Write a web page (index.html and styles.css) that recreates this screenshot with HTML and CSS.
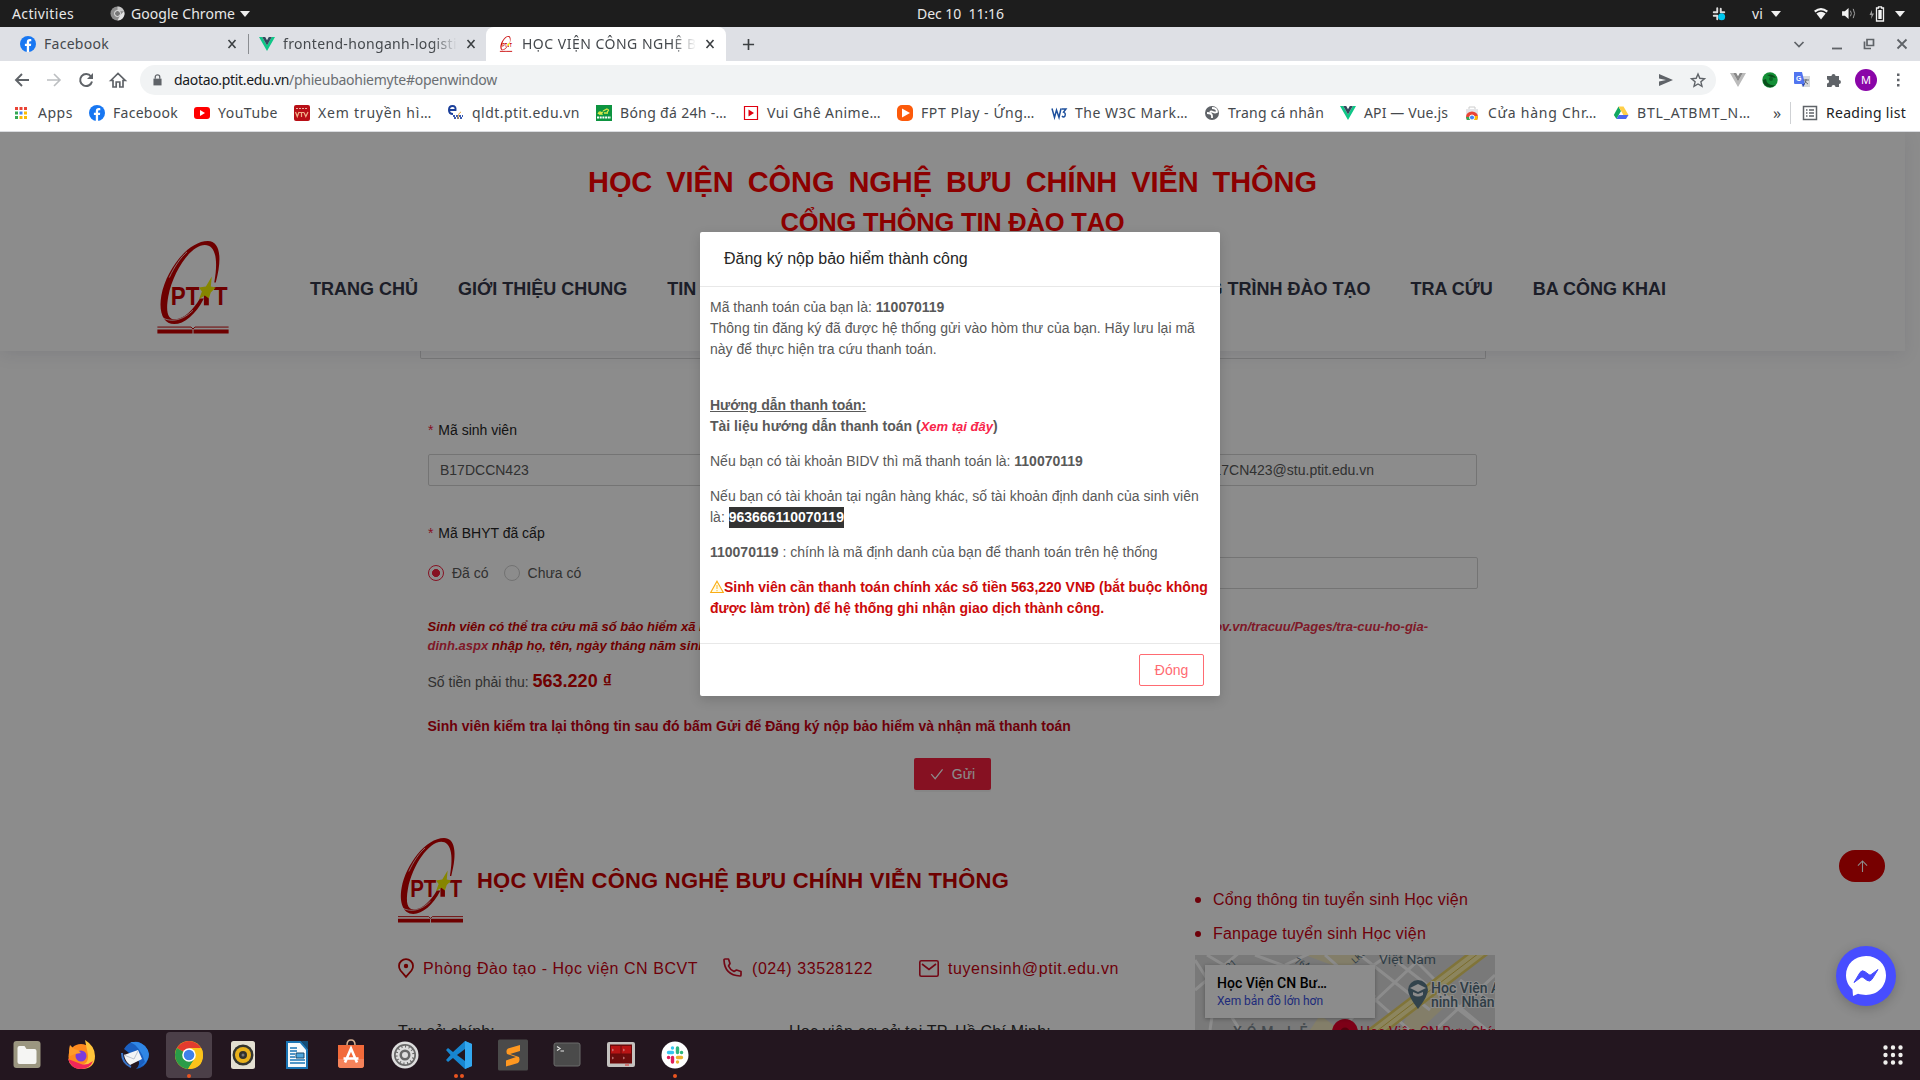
FILE: index.html
```html
<!DOCTYPE html>
<html lang="vi">
<head>
<meta charset="utf-8">
<title>Học viện Công nghệ Bưu chính Viễn thông</title>
<link rel="stylesheet" href="styles.css">
</head>
<body>
<svg class="defs" aria-hidden="true">
  <symbol id="fb" viewBox="0 0 16 16"><circle cx="8" cy="8" r="8" fill="#1877f2"/><path d="M6.8 16V10H4.9V7.8h1.9V6.2c0-2 1.1-3.1 2.9-3.1.8 0 1.6.2 1.6.2v1.9h-1c-.9 0-1.2.5-1.2 1.100v1.500h2.100L10.900 10H9.100v6z" fill="#fff"/></symbol>
  <symbol id="vue" viewBox="0 0 16 16"><path d="M0 1h3.200L8 9.400 12.800 1H16L8 15z" fill="#0fc787"/><path d="M3.200 1h3L8 4.200 9.800 1h3L8 9.400z" fill="#35495e"/></symbol>
  <symbol id="close" viewBox="0 0 16 16"><path d="M4.500 4l7 8M11.500 4l-7 8" stroke="#3c4043" stroke-width="1.600"/></symbol>
  <symbol id="ptit" viewBox="0 0 72 94">
    <path fill-rule="evenodd" d="M17 84C6 84 1 72 4 55 9 29 31 0 51 0c12 0 15 16 8 42h-1.500C62 17 58 4 48 4 34 4 16 30 11 56 8 73 11 80 19 79c8-1 17-9 24-21h4C39 74 27 84 17 84z" fill="#c80000"/>
    <path d="M4 77c10 6 22 3 32-7" stroke="#fff" stroke-width=".8" fill="none"/>
    <path d="M12 37C17 26 24 16 30 11" stroke="#fff" stroke-width=".8" fill="none"/>
    <text x="13.500" y="65" class="ptit-t" textLength="29" lengthAdjust="spacingAndGlyphs">PT</text><text x="57" y="65" class="ptit-t" textLength="14" lengthAdjust="spacingAndGlyphs">T</text>
    <path d="M47 54h5v11h-5z" fill="#c80000"/>
    <path d="M55 36l-1 10 5 1-5 5-2 6-4-3-6 4 3-8-3-4 7-1z" fill="#f5f500"/>
    <path d="M0 87h34l2 2 2-2h34" stroke="#c80000" stroke-width="1" fill="none"/><path d="M0 89.500h35.500v4H0zM36.500 89.500H72v4H36.500z" fill="#c80000"/>
  </symbol>
</svg>

<div class="sysbar">
  <span class="sys-act" data-w="62">Activities</span>
  <svg class="i15" viewBox="0 0 16 16"><circle cx="8" cy="8" r="7.500" fill="#8d8d8d"/><path d="M8 .5a7.500 7.500 0 0 1 7 5H8z" fill="#c8c8c8"/><path d="M15 5.500a7.500 7.500 0 0 1-7 10l3-6z" fill="#e2e2e2"/><circle cx="8" cy="8" r="3.200" fill="#777" stroke="#eee"/></svg>
  <span class="sys-app" data-w="104">Google Chrome</span><i class="tri"></i>
  <span class="sys-clock" data-w="87">Dec 10&nbsp; 11:16</span>
  <div class="sys-right">
    <svg class="s-slack" viewBox="0 0 16 16"><path d="M6 1.500v4M2 6h4M10 2v4M10 6h4M2 10h4M6 10v4" stroke="#ddd" stroke-width="2.200" stroke-linecap="round"/><circle cx="11" cy="11" r="4" fill="#00c8f0"/></svg>
    <span class="s-vi" data-w="11">vi</span><i class="tri s-t1"></i>
    <svg class="s-wifi" viewBox="0 0 16 14"><path d="M.5 4Q8-2 15.500 4L14 6Q8 1 2 6z" fill="#f2f2f2"/><path d="M3 7Q8 3 13 7l-5 6.500z" fill="#f2f2f2"/></svg>
    <svg class="s-snd" viewBox="0 0 16 14"><path d="M0 4.500h3L7 1v12L3 9.500H0z" fill="#f2f2f2"/><path d="M9 4q2 3 0 6M12 2q3 5 0 10" stroke="#aaa" fill="none"/></svg>
    <svg class="s-bat" viewBox="0 0 16 16"><path d="M3 4L.5 9h2L2 13l3-5.500H3z" fill="#999"/><path d="M7.500 2h2V.8h3V2h2v13h-7z" fill="none" stroke="#f2f2f2" stroke-width="1.300"/><path d="M9.300 4h3.400v9H9.300z" fill="#f2f2f2"/></svg>
    <i class="tri"></i>
  </div>
</div>

<div class="tabs">
  <div class="tab tab1"><svg class="i16"><use href="#fb"/></svg><span class="tt"><b data-w="65">Facebook</b></span><svg class="i16"><use href="#close"/></svg></div>
  <div class="tab tab2"><svg class="i16"><use href="#vue"/></svg><span class="tt fade"><b data-w="181">frontend-honganh-logistic</b></span><svg class="i16"><use href="#close"/></svg></div>
  <div class="tab tab3"><svg class="i16"><use href="#ptit"/></svg><span class="tt fade"><b data-w="186">HỌC VIỆN CÔNG NGHỆ BƯ</b></span><svg class="i16"><use href="#close"/></svg></div>
  <svg class="plus" viewBox="0 0 14 14"><path d="M7 1v12M1 7h12" stroke="#3c4043" stroke-width="1.800"/></svg>
  <div class="win">
    <svg viewBox="0 0 12 12"><path d="M1.500 4L6 8.500 10.500 4" fill="none" stroke="#5f6368" stroke-width="1.700"/></svg>
    <svg viewBox="0 0 12 12"><path d="M1 10.500h10" stroke="#5f6368" stroke-width="1.800"/></svg>
    <svg viewBox="0 0 12 12"><path d="M4 1.500h6.500v6H4zM1.500 3.500v7H8" fill="none" stroke="#5f6368" stroke-width="1.700"/></svg>
    <svg viewBox="0 0 12 12"><path d="M1.500 1.500l9 9M10.500 1.500l-9 9" stroke="#5f6368" stroke-width="1.800"/></svg>
  </div>
</div>

<div class="toolbar">
  <svg class="i16" viewBox="0 0 16 16"><path d="M15 8H2M8 2L2 8l6 6" fill="none" stroke="#5f6368" stroke-width="1.900"/></svg>
  <svg class="i16" viewBox="0 0 16 16"><path d="M1 8h13M8 2l6 6-6 6" fill="none" stroke="#bcbec1" stroke-width="1.600"/></svg>
  <svg class="i16" viewBox="0 0 16 16"><path d="M13 4.500A6 6 0 1 0 14 9.500" fill="none" stroke="#5f6368" stroke-width="2"/><path d="M15 1v6H9z" fill="#5f6368"/></svg>
  <svg class="i16" viewBox="0 0 16 16"><path d="M.8 8.500L8 1.500l7.200 7H13V15H9.800v-5H6.200v5H3V8.500z" fill="none" stroke="#5f6368" stroke-width="1.700"/></svg>
  <div class="omni">
    <svg class="lock" viewBox="0 0 10 13"><path d="M.5 5h9v7.500h-9z" fill="#5f6368"/><path d="M2.500 5V3a2.500 2.300 0 0 1 5 0v2" fill="none" stroke="#5f6368" stroke-width="1.400"/></svg>
    <span class="url"><span class="host" data-w="115">daotao.ptit.edu.vn</span><span data-w="208">/phieubaohiemyte#openwindow</span></span>
    <svg class="i16 send" viewBox="0 0 16 16"><path d="M1 2l14 6L1 14V9.500L8 8 1 6.500z" fill="#5f6368"/></svg>
    <svg class="i16" viewBox="0 0 16 16"><path d="M8 2l1.800 4.300 4.700.4-3.600 3.100 1.100 4.600L8 12l-4 2.400 1.100-4.600-3.600-3.100 4.700-.4z" fill="none" stroke="#5f6368" stroke-width="1.400"/></svg>
  </div>
  <svg class="i16" viewBox="0 0 16 16"><path d="M0 1h3.200L8 9.400 12.800 1H16L8 15z" fill="#bbb"/><path d="M3.200 1h3L8 4.200 9.800 1h3L8 9.400z" fill="#888"/></svg>
  <svg class="i16" viewBox="0 0 16 16"><circle cx="8" cy="8" r="7.700" fill="#149037"/><path d="M1 8a7 7 0 0 0 12 5q-8 1-9-6zM5 3q6-2 9 3l-5-1z" fill="#0a4f1c"/><circle cx="9" cy="7" r="2" fill="#0a6424"/></svg>
  <svg class="i16" viewBox="0 0 16 16"><path d="M6 4h10v11H8z" fill="#d5d7da"/><path d="M0 0h8l3 12H1q-1 0-1-1z" fill="#5175f0"/><path d="M8 12h3l-2 3z" fill="#2845b8"/><text x="2" y="9" class="g-t">G</text><path d="M9.500 8H15M12 7v1q0 3-2 4M11 9q1 2 3 3" stroke="#5a6068" stroke-width=".9" fill="none"/></svg>
  <svg class="i16" viewBox="0 0 16 16"><path d="M1 4h4.500a2 2 0 1 1 4 0H13v4a1.900 1.900 0 1 1 0 3.900V15H9.500a1.900 1.900 0 1 0-4 0H1v-3.500a1.900 1.900 0 1 0 0-4z" fill="#5f6368"/></svg>
  <span class="avatar">M</span>
  <svg class="i16" viewBox="0 0 16 16"><path d="M7 1.500h2.500V4H7zM7 6.800h2.500v2.500H7zM7 12h2.500v2.500H7z" fill="#5f6368"/></svg>
</div>

<div class="marks">
  <a><svg class="i12" viewBox="0 0 12 12"><path d="M0 0h3v3H0zM4.500 0h3v3h-3zM9 0h3v3H9z" fill="#ea4335"/><path d="M0 4.500h3v3H0z" fill="#34a853"/><path d="M4.500 4.500h3v3h-3z" fill="#4285f4"/><path d="M9 4.500h3v3H9zM4.500 9h3v3h-3zM9 9h3v3H9z" fill="#fbbc05"/><path d="M0 9h3v3H0z" fill="#34a853"/></svg><span data-w="35">Apps</span></a>
  <a><svg class="i16"><use href="#fb"/></svg><span data-w="65">Facebook</span></a>
  <a><svg class="i16" viewBox="0 0 16 16"><rect y="2" width="16" height="12" rx="3" fill="#f00"/><path d="M6 5l5 3-5 3z" fill="#fff"/></svg><span data-w="60">YouTube</span></a>
  <a><svg class="i16" viewBox="0 0 16 16"><rect width="16" height="16" rx="2" fill="#b80f16"/><path d="M1.500 7l1.800 4.500L5 7M5 7.500h5M7.500 8v4M10 7.500l1.800 4L14 7" fill="none" stroke="#f0b088" stroke-width="1.200"/><path d="M2 3.500h12" stroke="#e8b0a0" stroke-dasharray="2 1"/></svg><span data-w="114">Xem truyền hì…</span></a>
  <a><svg class="i16" viewBox="0 0 16 16"><path d="M1.500 5h6Q8 1 4.500 1T1 5t4 4" fill="none" stroke="#1b3f9a" stroke-width="2"/><path d="M5 11h10M6 13h9" stroke="#3b5bb0" stroke-width="1.800" stroke-dasharray="2 1"/><path d="M10 14q0-6 3-7" stroke="#e5a63c" fill="none"/></svg><span data-w="108">qldt.ptit.edu.vn</span></a>
  <a><svg class="i16" viewBox="0 0 16 16"><rect width="16" height="16" fill="#0d9440"/><path d="M2 9q2-4 4 0H3l4-2M7 6l4-2q3 1 0 3M8 8h4" stroke="#d8e84a" stroke-width="1.300" fill="none"/><path d="M1 12.500h14" stroke="#fff" stroke-width="2" stroke-dasharray="2 .7"/></svg><span data-w="107">Bóng đá 24h -…</span></a>
  <a><svg class="i16" viewBox="0 0 16 16"><path d="M1.500 1.500h13v13h-13z" fill="#fff" stroke="#e00010" stroke-width="1.200"/><path d="M5.500 4.500L11 8l-5.500 3.500z" fill="#e00010"/></svg><span data-w="114">Vui Ghê Anime…</span></a>
  <a><svg class="i16" viewBox="0 0 16 16"><rect width="16" height="16" rx="5" fill="#fc5a0a"/><path d="M5 3.500L13 8l-8 4.500z" fill="#fff"/></svg><span data-w="114">FPT Play - Ứng…</span></a>
  <a><svg class="i16" viewBox="0 0 16 16"><path d="M1 3.500l2.500 9L5.500 5l2.500 7.500L10 3.500" fill="none" stroke="#1c4f9c" stroke-width="1.500"/><path d="M10.500 4H15l-2.500 3.200q2.500.8 1.500 3.800-1.500 2-3 0" fill="none" stroke="#1c4f9c" stroke-width="1.400"/></svg><span data-w="113">The W3C Mark…</span></a>
  <a><svg class="i16" viewBox="0 0 16 16"><circle cx="8" cy="8" r="7" fill="#5f6368"/><path d="M8 3q5 0 5 4-2 1-4 0t-3 0M3 8q5 0 5 3v2" stroke="#fff" stroke-width="1.800" fill="none"/></svg><span data-w="96">Trang cá nhân</span></a>
  <a><svg class="i16"><use href="#vue"/></svg><span data-w="84">API — Vue.js</span></a>
  <a><svg class="i16" viewBox="0 0 16 16"><path d="M5 4V2h6v2" fill="none" stroke="#ccc"/><path d="M2 4h12v11H2z" fill="#e4e5e8"/><path d="M2 12a6 5.500 0 0 1 12 0l-1 3H3z" fill="#ea4335"/><path d="M2 12l1 3h5V12z" fill="#34a853"/><path d="M14 11l-1 4H8l1-4z" fill="#fbbc05"/><circle cx="8" cy="12.500" r="2.500" fill="#4285f4" stroke="#fff"/></svg><span data-w="109">Cửa hàng Chr…</span></a>
  <a><svg class="i16" viewBox="0 0 16 16"><path d="M5.500 1.500L8 6 3.500 14 .8 10z" fill="#11a861"/><path d="M5.500 1.500h5L15.500 10H10.400z" fill="#ffcf48"/><path d="M3.500 14l2.300-4h9.700L13 14z" fill="#4b66ee"/></svg><span data-w="114">BTL_ATBMT_N…</span></a>
  <span class="more">»</span>
  <a class="reading"><svg class="i16" viewBox="0 0 16 16"><path d="M1.500 1.500h13v13h-13z" fill="none" stroke="#5f6368" stroke-width="1.500"/><path d="M4 5h1.500M7 5h5M4 8h1.500M7 8h5M4 11h1.500M7 11h5" stroke="#5f6368" stroke-width="1.400"/></svg><span data-w="80">Reading list</span></a>
</div>

<div class="page">
  <header class="head">
    <h1><span data-w="729">HỌC VIỆN CÔNG NGHỆ BƯU CHÍNH VIỄN THÔNG</span></h1>
    <h2><span data-w="344">CỔNG THÔNG TIN ĐÀO TẠO</span></h2>
    <div class="navrow">
      <svg class="logo"><use href="#ptit"/></svg>
      <nav><a>TRANG CHỦ</a><a>GIỚI THIỆU CHUNG</a><a>TIN TỨC</a></nav>
      <nav class="nav-r"><a>CHƯƠNG TRÌNH ĐÀO TẠO</a><a>TRA CỨU</a><a>BA CÔNG KHAI</a></nav>
    </div>
  </header>

  <section class="form">
    <div class="panel-end"></div>
    <div class="row row1">
      <div class="field"><label><em>*</em> Mã sinh viên</label><div class="input">B17DCCN423</div></div>
      <div class="field"><label>&nbsp;</label><div class="input"></div></div>
      <div class="field"><label>&nbsp;</label><div class="input mail"><span>B17CN423@stu.ptit.edu.vn</span></div></div>
    </div>
    <div class="row row2">
      <div class="field"><label><em>*</em> Mã BHYT đã cấp</label>
        <div class="radios"><i class="radio on"></i><span>Đã có</span><i class="radio"></i><span>Chưa có</span></div></div>
      <div class="field wide"><label>&nbsp;</label><div class="input"></div></div>
    </div>
    <div class="note">
      <div class="note-1"><span>Sinh viên có thể tra cứu mã số bảo hiểm xã hội tại</span><a>https://baohiemxahoi.gov.vn/tracuu/Pages/tra-cuu-ho-gia-</a></div>
      <div><a>dinh.aspx</a> nhập họ, tên, ngày tháng năm sinh</div>
    </div>
    <div class="amount">Số tiền phải thu: <b>563.220 ₫</b></div>
    <div class="check">Sinh viên kiểm tra lại thông tin sau đó bấm Gửi để Đăng ký nộp bảo hiểm và nhận mã thanh toán</div>
    <button class="send-btn"><svg viewBox="0 0 14 14"><path d="M.8 6.500L5 11.500 13 1.500" fill="none" stroke="#fff" stroke-width="1.300"/></svg>Gửi</button>
  </section>

  <footer class="foot">
    <div class="foot-l">
      <div class="brand"><svg class="logo2"><use href="#ptit"/></svg><strong data-w="532">HỌC VIỆN CÔNG NGHỆ BƯU CHÍNH VIỄN THÔNG</strong></div>
      <div class="contacts">
        <svg class="c-pin" viewBox="0 0 16 20"><path d="M8 18.800L2.500 12.500A7 7 0 1 1 13.500 12.500z" fill="none" stroke="#c80000" stroke-width="1.800"/><circle cx="8" cy="8" r="2.200" fill="#c80000"/></svg>
        <span class="c1"><span data-w="275">Phòng Đào tạo - Học viện CN BCVT</span></span>
        <svg class="c-tel" viewBox="0 0 19 19"><path d="M5.500 1H2Q1 1 1 2 1.500 17 17 18q1 0 1-1v-3.500L13.500 12 11 13.500Q7 11.500 5.500 8L7 5.500z" fill="none" stroke="#d01028" stroke-width="1.700" stroke-linejoin="round"/></svg>
        <span class="c2"><span data-w="121">(024) 33528122</span></span>
        <svg class="c-mail" viewBox="0 0 20 17"><rect x=".8" y=".8" width="18.400" height="15.400" rx="1.500" fill="none" stroke="#d01028" stroke-width="1.600"/><path d="M3 4l7 5.500L17 4" fill="none" stroke="#d01028" stroke-width="1.600"/></svg>
        <span data-w="171">tuyensinh@ptit.edu.vn</span>
      </div>
      <div class="addr"><span class="a1"><span data-w="97">Trụ sở chính:</span></span><span data-w="262">Học viện cơ sở tại TP. Hồ Chí Minh:</span></div>
    </div>
    <div class="foot-r">
      <ul><li><span data-w="255">Cổng thông tin tuyển sinh Học viện</span></li><li><span data-w="213">Fanpage tuyển sinh Học viện</span></li></ul>
      <div class="map">
        <svg viewBox="0 0 300 75">
          <rect width="300" height="75" fill="#dcdcdc"/>
          <path d="M110 0h60L150 15z M215 55l30-25 15 12-35 33h-20z M125 60l20 15h-30z" fill="#eee6c0"/>
          <g stroke="#fff" stroke-width="3" fill="none"><path d="M0 5l45 70M12 0l20 12M45-3L0 35M60 0l40 15M90 10l30-14M130 0l90 80M165 0l70 55M200 5l90 70M150 30L215-15M165 60l80-75M140 80l40-40M15 75L18 55M250 40l60 50M265 25l50 35M215 0l35 35M240 75l60-55"/></g>
          <path d="M170 85L292-8" stroke="#e9d368" stroke-width="14"/><path d="M170 85L292-8" stroke="#fff3ac" stroke-width="9"/><path d="M170 85L292-8" stroke="#ddc34e" stroke-width="1"/>
          <path d="M223 54q-10-13-10-19a10 10 0 1 1 20 0q0 6-10 19z" fill="#5c7a8b"/><path d="M215 33l8-4 8 4-8 4zM218 37v3q5 3 10 0v-3l-5 2z" fill="#fff"/>
          <circle cx="150" cy="77" r="13" fill="#e4002b"/><circle cx="150" cy="77" r="4.500" fill="#9a0018"/>
          <g class="map-t"><text x="184" y="8.500" textLength="57" lengthAdjust="spacingAndGlyphs">Việt Nam</text><text x="236" y="38" class="map-b">Học Viện An</text><text x="236" y="52" class="map-b">ninh Nhân</text>
          <text x="38" y="82" letter-spacing="5" class="map-x">XÓM LẺ</text><text x="165" y="82" class="map-red">Học Viện CN Bưu Chính</text>
          <text x="34" y="15" font-size="9" transform="rotate(-38 34 15)">81</text><text x="99" y="8" font-size="9" transform="rotate(25 99 8)">764</text><text x="160" y="9" font-size="9" transform="rotate(-42 160 9)">LK6</text></g>
        </svg>
        <div class="map-card"><b data-w="110">Học Viện CN Bư…</b><span data-w="106">Xem bản đồ lớn hơn</span></div>
      </div>
    </div>
  </footer>

  <div class="totop"><svg viewBox="0 0 12 13"><path d="M6 13V1M1 6l5-5 5 5" fill="none" stroke="#fff" stroke-width="1.200"/></svg></div>
  <div class="mask"></div>

  <div class="modal">
    <div class="m-head">Đăng ký nộp bảo hiểm thành công</div>
    <div class="m-body">
      <p>Mã thanh toán của bạn là: <b>110070119</b><br>Thông tin đăng ký đã được hệ thống gửi vào hòm thư của bạn. Hãy lưu lại mã này để thực hiện tra cứu thanh toán.</p>
      <p class="guide"><b><u>Hướng dẫn thanh toán:</u><br>Tài liệu hướng dẫn thanh toán (<a>Xem tại đây</a>)</b></p>
      <p>Nếu bạn có tài khoản BIDV thì mã thanh toán là: <b>110070119</b></p>
      <p>Nếu bạn có tài khoản tại ngân hàng khác, số tài khoản định danh của sinh viên là: <b class="sel">963666110070119</b></p>
      <p><b>110070119</b> : chính là mã định danh của bạn để thanh toán trên hệ thống</p>
      <p class="warn"><svg viewBox="0 0 14 14"><path d="M7 1.200L13.300 12.500H.7z" fill="#fffbe6" stroke="#faad14" stroke-width="1.100"/><path d="M7 5v4M7 10v1.300" stroke="#fac64b" stroke-width="1.200"/></svg>Sinh viên cần thanh toán chính xác số tiền 563,220 VNĐ (bắt buộc không được làm tròn) để hệ thống ghi nhận giao dịch thành công.</p>
    </div>
    <div class="m-foot"><button>Đóng</button></div>
  </div>

  <div class="msgr"><svg viewBox="0 0 40 40"><path d="M20 0C8.500 0 0 8.300 0 19.300 0 25 2.500 30 6.500 33.500L7 40l5-2.200C14.500 38.500 17 39 20 39c11.500 0 20-8.500 20-19.700S31.500 0 20 0z" fill="#fff"/><path d="M8 26.500l6-10q2-3 5-.8l4 3q1 .8 2 0l7-5.200-6 9.800q-2 3-5 1l-4-3q-1-.8-2 0z" fill="#474dff" stroke="#474dff" stroke-linejoin="round"/></svg></div>
</div>

<div class="dock">
  <div class="app"><svg viewBox="0 0 28 28"><rect x=".5" width="27" height="27" rx="3" fill="#9b9680"/><path d="M4.500 7q0-2 2-2h5l2 3h8q2 0 2 2v11q0 2-2 2h-15q-2 0-2-2z" fill="#f5f5f3"/></svg></div>
  <div class="app"><svg viewBox="0 0 28 28"><circle cx="14" cy="15.500" r="12.500" fill="#ff8a1e"/><path d="M18-1q10 6 10 16 0 13-14 13Q3 28 1 17q4 7 11 7 10 0 9-10z" fill="#ffc43a"/><path d="M1 18q3 10 13 10 9 0 12-8-6 5-12 3z" fill="#f0275a"/><circle cx="14" cy="15" r="5.500" fill="#7a3bde"/><path d="M3 4l4 4 4 1 3 3-6 1-5 2q-2-4 0-11z" fill="#ff9d2a"/></svg></div>
  <div class="app"><svg viewBox="0 0 28 28"><path d="M3 8Q8-1 18 1l6 4q5 6 3 13-2 8-12 10 5-5 2-9z" fill="#1a5fc0"/><path d="M9 1q10 4 15 20l-5 5q9-5 9-13Q26 3 16 1z" fill="#2f86e5"/><path d="M3 14L17 9l4 9-12 6q-5-4-6-10z" fill="#f3f4f6"/><path d="M3 14l10 4 4-8" stroke="#bcc4d0" fill="none"/><path d="M1 12q0 10 9 14" stroke="#3a74c8" stroke-width="2" fill="none"/></svg></div>
  <div class="app on"><svg viewBox="0 0 28 28"><circle cx="14" cy="14" r="14" fill="#fbc116"/><path d="M14 14L1.900 7A14 14 0 0 1 26.100 7z" fill="#e33b2e"/><path d="M14 14L1.900 7A14 14 0 0 0 13 28l7-11z" fill="#2a9c48"/><path d="M14 7h12.100Q28 10 28 14q0 14-15 14l7-11z" fill="#fcc31a"/><circle cx="14" cy="14" r="6.800" fill="#fff"/><circle cx="14" cy="14" r="5.300" fill="#3f80ea"/></svg><i></i></div>
  <div class="app"><svg viewBox="0 0 28 28"><rect x="2" width="24" height="28" rx="2.500" fill="#e4e0d2"/><circle cx="14" cy="14" r="10.500" fill="#33352f"/><circle cx="14" cy="14" r="8" fill="#e9b21c"/><circle cx="14" cy="14" r="4" fill="#30322d"/><circle cx="14" cy="14" r="1.500" fill="#777"/></svg></div>
  <div class="app"><svg viewBox="0 0 28 28"><path d="M3 0h15l7 8v20H3z" fill="#1a75b5"/><path d="M5 2h12l6 7v17H5z" fill="#f5fafc"/><path d="M18 0h7v8z" fill="#124d78"/><path d="M7 7h7M7 10h7M7 13h5M7 16h5M7 19h15M7 22h15" stroke="#1a75b5" stroke-width="1.500"/><path d="M13 12h8v5h-8z" fill="#4fa6dc" stroke="#17496d"/></svg></div>
  <div class="app"><svg viewBox="0 0 28 28"><path d="M1 4h26v20q0 3-3 3H4q-3 0-3-3z" fill="#f26a3a"/><path d="M1 18h26v6q0 3-3 3H4q-3 0-3-3z" fill="#f5835b"/><path d="M10 4q0-5 4-5t4 5" stroke="#d9b18f" stroke-width="1.500" fill="none"/><path d="M8 21.500l6-14 6 14M6.500 17.500h15" stroke="#fff" stroke-width="2.600" fill="none"/></svg></div>
  <div class="app"><svg viewBox="0 0 28 28"><circle cx="14" cy="14" r="13.500" fill="#dedede"/><circle cx="14" cy="14" r="11" fill="#686868"/><circle cx="14" cy="14" r="8" fill="none" stroke="#dedede" stroke-width="2.500" stroke-dasharray="2.500 1"/><circle cx="14" cy="14" r="6.500" fill="none" stroke="#dedede" stroke-width="2"/><circle cx="14" cy="14" r="3" fill="#dedede"/></svg></div>
  <div class="app"><svg viewBox="0 0 28 28"><path d="M20 0l7 3v22l-7 3L8 17l-5 4-2-2 4.500-5L1 9l2-2 5 4z" fill="#1786d0"/><path d="M20 0l7 3v22l-7 3z" fill="#33a8f0"/><path d="M20 8v12l-8-6z" fill="#22161f"/></svg><i></i><i></i></div>
  <div class="app"><svg viewBox="0 0 28 28"><rect x="-1" y="-1.500" width="30" height="31" rx="1.500" fill="#4a4a4a"/><path d="M21 4v6l-10 3 9 3q1.500 4-1 6L7 25.500v-6L17 16l-9-3q-1.500-4 1-5.500z" fill="#ff9820"/></svg></div>
  <div class="app"><svg viewBox="0 0 28 28"><rect x="1" y="2" width="26" height="23" rx="2" fill="#4a4a4a" stroke="#6b6b6b"/><path d="M4 5.500l3 2-3 2M7.500 10H11" stroke="#e6e6e6" fill="none" stroke-width="1.200"/></svg></div>
  <div class="app"><svg viewBox="0 0 28 28"><rect y="1" width="28" height="25" rx="2" fill="#c4c2bf"/><rect x="3" y="3.500" width="22" height="19" fill="#6b0a0a"/><path d="M4 5h9.500v7.500H4zM14.500 5H24v7.500h-9.500z" fill="#b81414"/><path d="M4 13.500h9.500V21H4zM14.500 13.500H24V21h-9.500z" fill="#6a0d0d"/><path d="M5 8l1.500 1L5 10M16 8l1.500 1-1.500 1M5 16l1.500 1L5 18M16 16l1.500 1-1.500 1" stroke="#d89090" stroke-width=".8" fill="none"/><path d="M18 24h4" stroke="#e03030"/></svg></div>
  <div class="app"><svg viewBox="0 0 28 28"><circle cx="14" cy="14" r="13.500" fill="#fff"/><g stroke-width="3.400" stroke-linecap="round"><path d="M11.500 7v.1M7.500 11.500h4" stroke="#36c5f0"/><path d="M16.500 7v4.500M20.500 11.500h.1" stroke="#2eb67d"/><path d="M11.500 16.500V21M7.500 16.500h.1" stroke="#e01e5a"/><path d="M16.500 21v.1M16.500 16.500h4" stroke="#ecb22e"/></g></svg><i></i></div>
  <svg class="grid" viewBox="0 0 20 20"><path d="M2.500 2.500h0M10 2.500h0M17.500 2.500h0M2.500 10h0M10 10h0M17.500 10h0M2.500 17.500h0M10 17.500h0M17.500 17.500h0" stroke="#f0efed" stroke-width="4.400" stroke-linecap="round"/></svg>
</div>
<script src="fit.js"></script>
</body>
</html>
```
FILE: styles.css
```css
* { box-sizing: border-box; }
body { margin: 0; width: 1920px; height: 1080px; overflow: hidden; background: #fff; font: 14px/22px "Liberation Sans", Arial, sans-serif; color: #595959; }
svg { display: block; flex: none; overflow: visible; }
p, h1, h2, ul { margin: 0; padding: 0; }
.defs { position: absolute; width: 0; height: 0; }
.ptit-t { font: bold 26px "Liberation Sans", sans-serif; fill: #c80000; }
.g-t { font: bold 7px "Liberation Sans", sans-serif; fill: #fff; }
.i16 { width: 16px; height: 16px; }
.i15 { width: 15px; height: 15px; }
.i12 { width: 12px; height: 12px; }
[data-w] { white-space: nowrap; }

/* System bar */
.sysbar, .tabs, .toolbar, .marks { display: flex; align-items: center; font-family: "Noto Sans", "Open Sans", sans-serif; white-space: nowrap; }
.sysbar { height: 27px; background: #1d1d1d; color: #e8e8e8; padding: 0 15px 0 12px; }
.sys-act { width: 62px; margin-right: 36px; }
.sysbar > .i15 { margin-right: 6px; }
.sys-app { width: 104px; margin-right: 5px; }
.tri { width: 0; height: 0; border: 5px solid transparent; border-top: 6px solid #eee; border-bottom: 0; }
.sys-clock { margin-left: 667px; width: 87px; }
.sys-right { flex: 1; display: flex; align-items: center; justify-content: flex-end; }
.s-slack { width: 14px; height: 14px; margin-right: 26px; }
.s-vi { width: 11px; margin-right: 8px; }
.s-t1 { margin-right: 32px; }
.s-wifi { width: 16px; height: 13px; margin-right: 13px; }
.s-snd { width: 15px; height: 13px; margin-right: 12px; }
.s-bat { width: 16px; height: 16px; margin-right: 10px; }

/* Tabs */
.tabs { height: 34px; background: #dee0e5; color: #45494d; }
.tab { display: flex; align-items: center; height: 34px; }
.tab b { font-weight: 400; }
.tt { flex: 1; overflow: hidden; margin: 0 6px 0 8px; }
.fade { -webkit-mask-image: linear-gradient(90deg, #000 86%, transparent); mask-image: linear-gradient(90deg, #000 86%, transparent); }
.tab1 { width: 228px; margin-left: 20px; padding-right: 8px; }
.tab2 { width: 238px; padding: 0 7px 0 11px; position: relative; }
.tab2::before { content: ""; position: absolute; left: 0; top: 7px; width: 1px; height: 20px; background: #8a8d91; }
.tab3 { width: 240px; background: #fff; border-radius: 8px 8px 0 0; padding: 0 8px 0 12px; }
.plus { width: 13px; height: 13px; margin-left: 16px; }
.win { margin-left: auto; display: flex; gap: 20px; padding-right: 12px; }
.win svg { width: 12px; height: 12px; }
.win svg:first-child { margin-right: 6px; }
.win svg:last-child { margin-left: 1px; }

/* Toolbar */
.toolbar { height: 38px; padding: 0 14px; gap: 16px; }
.omni { flex: 1; height: 30px; border-radius: 15px; background: #f1f3f4; display: flex; align-items: center; padding: 0 10px 0 13px; margin: 0 -2px; }
.lock { width: 9px; height: 12px; margin: 0 12px 0 0; }
.url { flex: 1; display: flex; color: #6a6e72; }
.host { color: #17191c; width: 115px; }
.send { margin-right: 16px; }
.avatar { width: 22px; height: 22px; margin: 0 -3px; border-radius: 50%; background: #8a05a8; color: #fff; font-size: 11px; text-align: center; }

/* Bookmarks */
.marks { height: 33px; border-bottom: 1px solid #dadce0; padding: 0 14px 5px 15px; gap: 16px; color: #45494d; }
.marks a { display: flex; align-items: center; }
.marks a svg { margin-right: 8px; }
.marks a:first-child svg { margin-right: 11px; }
.more { margin: 0 0 0 6px; width: 10px; font-size: 16px; }
.reading { border-left: 1px solid #cfd1d4; padding-left: 11px; margin-left: -8px; color: #202124; }

/* Page */
.page { position: relative; height: 898px; overflow: hidden; background: #fff; }
.mask { position: absolute; inset: 0; background: rgba(0, 0, 0, .45); }
.head { position: relative; width: 1905px; height: 219px; background: #fff; box-shadow: 0 4px 16px rgba(30, 30, 80, .09); color: #f00; text-align: center; padding-top: 30px; }
h1 { font-size: 29px; line-height: 40px; word-spacing: 6px; }
h2 { font-size: 25.500px; line-height: 40px; }
.navrow { display: flex; margin-top: -1px; padding-left: 157px; }
.logo { width: 72px; height: 93px; }
nav { display: flex; gap: 40px; margin-left: 81px; padding-top: 37px; font: bold 18px/22px "Liberation Sans", sans-serif; color: #333749; white-space: nowrap; }
.nav-r { margin-left: auto; padding-right: 239px; }

.form { width: 1066px; margin-left: 420px; }
.panel-end { height: 8px; border: 1px solid #d9d9d9; border-top: 0; border-radius: 0 0 2px 2px; }
.row { display: grid; grid-template-columns: repeat(3, 1fr); }
.row1 { margin-top: 60px; width: 1065px; }
.row2 { margin-top: 36px; }
.field { padding: 0 8px; }
.wide { grid-column: span 2; }
label { display: block; height: 22px; margin-bottom: 13px; color: #262626; }
label em { color: #f5213f; font-style: normal; margin-right: 1px; }
.input { height: 32px; border: 1px solid #d4d4d4; border-radius: 2px; padding: 4px 11px; }
.mail { display: flex; justify-content: flex-end; padding-right: 102px; }
.radios { display: flex; align-items: center; height: 32px; }
.radios span { margin: 0 15px 0 8px; }
.radio { width: 16px; height: 16px; border: 1px solid #d0d0d0; border-radius: 50%; }
.radio.on { border-color: #f5213f; background: radial-gradient(circle, #f5213f 3.700px, transparent 4.300px); }
.note { margin-top: 28px; padding: 0 8px 0 7.500px; font: italic bold 13px/19px "Liberation Sans", sans-serif; color: #c00; }
.note-1 { display: flex; justify-content: space-between; padding-right: 50px; }
.note a { color: #e8304a; }
.amount { margin: 15px 0 0 7.500px; height: 22px; }
.amount b { font-size: 18px; color: #c00; }
.check { margin: 23px 0 21px 7.500px; font-weight: bold; color: #c80012; }
button { font: 14px/22px "Liberation Sans", sans-serif; height: 32px; border-radius: 2px; }
.send-btn { display: flex; align-items: center; justify-content: center; gap: 8px; width: 77px; margin-left: 494px; padding: 0; border: 0; background: #f5203f; color: #fff; box-shadow: 0 2px 0 rgba(0, 0, 0, .045); }
.send-btn svg { width: 14px; height: 13px; }

.foot { display: flex; margin: 48px 0 0 398px; font-size: 16px; line-height: 24px; color: #c90012; white-space: nowrap; }
.foot-l { width: 797px; }
.brand { display: flex; align-items: center; height: 85px; }
.logo2 { width: 65px; height: 85px; margin-right: 14px; }
.brand strong { font-size: 22px; color: #c80000; }
.contacts { display: flex; align-items: center; margin-top: 32px; }
.contacts span span { padding-top: 1px; }
.contacts > span { padding-top: 1px; }
.c-pin { width: 16px; height: 20px; margin-right: 9px; }
.c1 { width: 300px; }
.c-tel { width: 19px; height: 19px; margin: -2px 10px 0 0; }
.c2 { width: 167px; }
.c-mail { width: 20px; height: 17px; margin-right: 9px; }
.addr { display: flex; margin-top: 39px; color: #303030; }
.a1 { width: 391px; }
.foot-r { padding-top: 50px; }
ul { list-style: none; }
li { height: 24px; margin-bottom: 10px; display: flex; align-items: center; }
li::before { content: ""; width: 6px; height: 6px; border-radius: 50%; background: #c90012; margin-right: 12px; }
.map { position: relative; width: 300px; height: 75px; margin-top: -1px; overflow: hidden; }
.map-t { font: 12px Roboto, sans-serif; fill: #56707f; }
.map-b { font-size: 14px; font-weight: 500; stroke: #fff; stroke-width: 2px; paint-order: stroke; }
.map-x { font-size: 14px; font-weight: 500; fill: #7b8790; }
.map-red { fill: #e4002b; font-size: 14px; }
.map-card { position: absolute; left: 10px; top: 10px; width: 170px; height: 53px; background: #fff; box-shadow: 0 1px 4px rgba(0, 0, 0, .3); padding: 9px 12px; font: 12px/18px Roboto, sans-serif; color: #3a50e0; display: flex; flex-direction: column; }
.map-card b { font-size: 14px; color: #000; font-weight: 500; }
.totop { position: absolute; left: 1839px; top: 718px; width: 46px; height: 32px; border-radius: 16px; background: #d90000; display: flex; align-items: center; justify-content: center; }
.totop svg { width: 11px; height: 12px; }

/* Modal */
.modal { position: absolute; left: 700px; top: 100px; width: 520px; height: 464px; background: #fff; border-radius: 2px; box-shadow: 0 4px 12px rgba(0, 0, 0, .15); display: flex; flex-direction: column; }
.m-head { height: 55px; border-bottom: 1px solid #e8e8e8; padding: 16px 24px; font-size: 16px; color: #262626; }
.m-body { flex: 1; padding: 10px; line-height: 21px; }
.m-body p { margin-bottom: 14px; }
.m-body .guide { margin-top: 35px; }
.guide a { color: #f8244a; font-size: 13px; font-style: italic; }
.sel { background: #333; color: #fff; display: inline-block; }
.warn { color: #cc0a0a; font-weight: bold; }
.warn svg { display: inline; width: 14px; height: 14px; vertical-align: -2px; }
.m-foot { height: 53px; border-top: 1px solid #e8e8e8; padding: 10px 16px; text-align: right; }
.m-foot button { width: 65px; background: #fff; border: 1px solid #ff6b72; color: #ff6b72; padding: 0; }

.msgr { position: absolute; left: 1836px; top: 814px; width: 60px; height: 60px; border-radius: 50%; background: #474dff; display: flex; align-items: center; justify-content: center; box-shadow: 0 3px 12px rgba(0, 0, 0, .2); }
.msgr svg { width: 40px; height: 40px; }

/* Dock */
.dock { display: flex; align-items: center; gap: 8px; height: 50px; background: #23161f; padding: 0 17px 0 4px; }
.app { position: relative; width: 46px; height: 46px; display: flex; align-items: flex-end; justify-content: center; gap: 2px; border-radius: 4px; }
.app.on { background: #4b3f48; }
.app svg { position: absolute; left: 9px; top: 9px; width: 28px; height: 28px; }
.app i { width: 4px; height: 4px; border-radius: 50%; background: #e95420; }
.grid { width: 20px; height: 20px; margin-left: auto; }
```
FILE: fit.js
```js
// Tracks each label so that it fills its slot width.
document.querySelectorAll('[data-w]').forEach(function (el) {
  var target = +el.dataset.w;
  el.style.display = 'inline-block';
  el.style.width = 'auto';
  el.style.flex = 'none';
  if (el.parentElement.classList.contains('map-card')) el.style.alignSelf = 'flex-start';
  var natural = el.getBoundingClientRect().width;
  el.style.letterSpacing = (target - natural) / el.textContent.length + 'px';
  el.style.width = target + 'px';
});
```
